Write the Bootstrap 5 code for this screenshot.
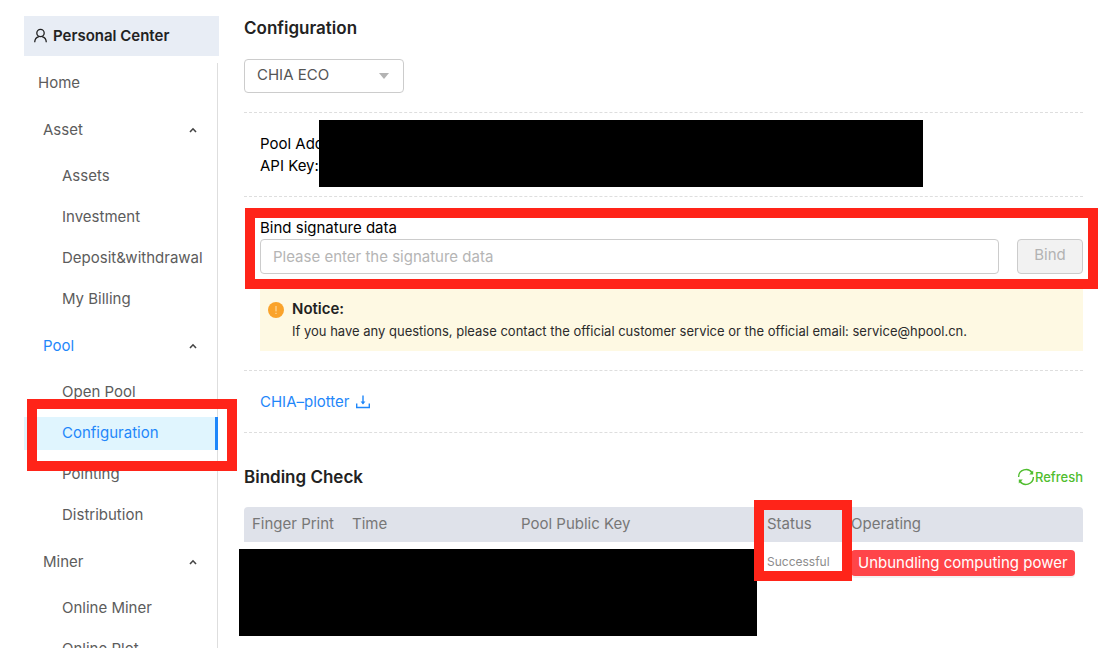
<!DOCTYPE html>
<html lang="en">
<head>
<meta charset="utf-8">
<meta name="viewport" content="width=device-width, initial-scale=1">
<title>Configuration</title>
<link href="https://cdn.jsdelivr.net/npm/bootstrap@5.3.0/dist/css/bootstrap.min.css" rel="stylesheet">
<style>
  body { font-family: Inter, "Liberation Sans", sans-serif; font-size: 15px; line-height: 22px; color: #000; background: #fff; }
  a { text-decoration: none; }
  .page { scrollbar-width: none; padding: 16px 19px 0 24px; gap: 25px; }
  .page::-webkit-scrollbar { display: none; }

  /* Sidebar */
  .side { width: 195px; }
  .side-title { height: 40px; background: #e8edf5; color: #222; font-weight: 600; padding-left: 9px; gap: 4px; margin-bottom: 7px; }
  .side-menu { margin-right: 1px; border-right: 1px solid #dedede; }
  .side-menu a, .side-menu button { color: #5c5c5c; }
  .home-link { height: 41px; padding-left: 14px; padding-bottom: 1px; }
  .group-btn { height: 40px; margin: 6px 0; padding: 0 19px; background: none; }
  .side-menu .group-btn.current { color: #1f87fa; }
  .group-btn svg { color: #444; }
  .sub-item { padding: 4px 0; }
  .sub-item a { height: 33px; padding-left: 38px; padding-bottom: 1px; }
  .sub-item a.current { color: #1f87fa; background: #e0f5fe; border-right: 3px solid #1f87fa; margin-right: -1px; }

  /* Highlight frames and blacked-out data */
  .frame { position: absolute; border: 10px solid #ff2419; pointer-events: none; z-index: 3; }
  .blackout { position: absolute; background: #000; z-index: 2; }
  .frame-menu { left: 3px; top: -14px; width: 210px; height: 72px; }
  .frame-bind { left: 1px; right: -15px; top: 11px; height: 81px; }
  .frame-status { right: 231px; top: -7px; width: 98px; height: 81px; }
  .blackout-pool { left: 75px; right: 160px; top: 7px; height: 67px; }
  .blackout-row { left: -5px; right: 326px; top: 42px; height: 87px; }

  /* Main column */
  .main-title { font-size: 17px; line-height: 24px; font-weight: 600; color: #222; margin: 0; }
  .pool-select { width: 160px; height: 34px; padding: 0 36px 1px 12px; margin-top: 19px; margin-bottom: 19px; border: 1px solid #ccc; border-radius: 4px; font-size: 15px; color: #555;
    background-image: url("data:image/svg+xml,%3Csvg xmlns='http://www.w3.org/2000/svg' viewBox='0 0 10 6'%3E%3Cpath fill='%23b3b3b3' d='M0 0h10L5 6z'/%3E%3C/svg%3E");
    background-size: 10px 6px; background-position: right 14px center; }
  .block { border-top: 1px dashed #dedede; padding-left: 16px; position: relative; }
  .pool-info { padding-top: 20px; padding-bottom: 19px; }
  .bind-block { padding-top: 20px; padding-bottom: 19px; }
  .bind-row { gap: 18px; }
  .bind-row .form-control { height: 35px; border: 1px solid #ccc; border-radius: 4px; padding: 0 12px; font-size: 15px; }
  .bind-row .form-control::placeholder { color: #b5b5b5; }
  .bind-row .btn { width: 66px; height: 35px; border: 1px solid #ccc; border-radius: 4px; background: #f2f2f2; color: #b3b3b3; font-size: 15px; opacity: 1; padding: 0 0 2px; }
  .notice { background: #fef9e3; margin-top: 10px; padding: 14px 8px 8px; gap: 8px; color: #2b2b2b; }
  .notice strong { font-weight: 600; color: #222; }
  .notice p { font-size: 13px; line-height: 23px; }
  .notice svg { margin-top: 4px; }
  .plotter { padding-top: 20px; padding-bottom: 19px; }
  .plotter a { color: #1f87fa; gap: 5px; }
  .check-block { border-top: 1px dashed #dedede; padding-top: 32px; }
  .refresh { color: #4fbd2e; font-size: 13px; font-weight: 500; background: none; line-height: 24px; }
  .check-table { table-layout: fixed; margin-top: 18px; }
  .check-table th { height: 35px; padding: 0 8px 2px; background: #dfe2ea; color: #777; font-weight: 400; vertical-align: middle; white-space: nowrap; }
  .check-table th:first-child { border-top-left-radius: 4px; }
  .check-table th:last-child { border-top-right-radius: 4px; }
  .check-table td { height: 42px; padding: 0 8px; vertical-align: middle; white-space: nowrap; }
  .check-table .state { color: #8c8c8c; font-size: 12px; padding-bottom: 2px; }
  .unbind { height: 26px; padding: 0 7px; border: 0; border-radius: 4px; background: #ff4549; color: #fff; font-size: 15px; line-height: 26px; box-shadow: 0 2px 0 rgba(0, 0, 0, .05); }
</style>
</head>
<body>
<div class="page d-flex vh-100 overflow-auto">
  <aside class="side flex-shrink-0 d-flex flex-column">
    <div class="side-title d-flex align-items-center flex-shrink-0">
      <svg width="16" height="16" viewBox="0 0 16 16" fill="none" stroke="currentColor" stroke-width="1.3" aria-hidden="true"><circle cx="7.5" cy="5" r="3.7"/><path d="M1.7 14.2c.1-3 1.8-5 4.2-5.6M13.3 14.2c-.1-3-1.8-5-4.2-5.6"/></svg>
      <span>Personal Center</span>
    </div>
    <nav class="side-menu flex-grow-1">
      <a class="home-link d-flex align-items-center" href="#">Home</a>
      <button type="button" class="group-btn w-100 border-0 d-flex align-items-center justify-content-between">Asset
        <svg width="10" height="10" viewBox="0 0 10 10" fill="none" stroke="currentColor" stroke-width="1.6" aria-hidden="true"><path d="M2 7l3-3.2L8 7"/></svg></button>
      <ul class="list-unstyled m-0">
        <li class="sub-item"><a class="d-flex align-items-center" href="#">Assets</a></li>
        <li class="sub-item"><a class="d-flex align-items-center" href="#">Investment</a></li>
        <li class="sub-item"><a class="d-flex align-items-center" href="#">Deposit&amp;withdrawal</a></li>
        <li class="sub-item"><a class="d-flex align-items-center" href="#">My Billing</a></li>
      </ul>
      <button type="button" class="group-btn current w-100 border-0 d-flex align-items-center justify-content-between">Pool
        <svg width="10" height="10" viewBox="0 0 10 10" fill="none" stroke="currentColor" stroke-width="1.6" aria-hidden="true"><path d="M2 7l3-3.2L8 7"/></svg></button>
      <ul class="list-unstyled m-0">
        <li class="sub-item"><a class="d-flex align-items-center" href="#">Open Pool</a></li>
        <li class="sub-item position-relative"><a class="current d-flex align-items-center" href="#" aria-current="page">Configuration</a><span class="frame frame-menu"></span></li>
        <li class="sub-item"><a class="d-flex align-items-center" href="#">Pointing</a></li>
        <li class="sub-item"><a class="d-flex align-items-center" href="#">Distribution</a></li>
      </ul>
      <button type="button" class="group-btn w-100 border-0 d-flex align-items-center justify-content-between">Miner
        <svg width="10" height="10" viewBox="0 0 10 10" fill="none" stroke="currentColor" stroke-width="1.6" aria-hidden="true"><path d="M2 7l3-3.2L8 7"/></svg></button>
      <ul class="list-unstyled m-0">
        <li class="sub-item"><a class="d-flex align-items-center" href="#">Online Miner</a></li>
        <li class="sub-item"><a class="d-flex align-items-center" href="#">Online Plot</a></li>
      </ul>
    </nav>
  </aside>

  <main class="flex-grow-1">
    <h1 class="main-title">Configuration</h1>
    <select class="pool-select form-select" aria-label="Pool"><option>CHIA ECO</option></select>

    <section class="block pool-info">
      <div>Pool Address:</div>
      <div>API Key:</div>
      <span class="blackout blackout-pool"></span>
    </section>

    <section class="block bind-block">
      <label class="d-block" for="signature">Bind signature data</label>
      <div class="bind-row d-flex">
        <input type="text" class="form-control" id="signature" placeholder="Please enter the signature data">
        <button type="button" class="btn flex-shrink-0" disabled>Bind</button>
      </div>
      <div class="notice d-flex">
        <svg class="flex-shrink-0" width="16" height="16" viewBox="0 0 16 16" aria-hidden="true"><circle cx="8" cy="8" r="8" fill="#faa32b"/><path d="M8 4v5.4M8 10.8v1.2" stroke="#fde3b5" stroke-width="1"/></svg>
        <div>
          <strong class="d-block">Notice:</strong>
          <p class="m-0">If you have any questions, please contact the official customer service or the official email: service@hpool.cn.</p>
        </div>
      </div>
      <span class="frame frame-bind"></span>
    </section>

    <section class="block plotter">
      <a class="d-inline-flex align-items-center" href="#">CHIA–plotter
        <svg width="16" height="16" viewBox="0 0 16 16" fill="none" stroke="currentColor" stroke-width="1.4" aria-hidden="true"><path d="M1.7 9.5v4h12.6v-4M8 1.5v8"/><path d="M5.6 7.5h4.8L8 10.6z" fill="currentColor" stroke="none"/></svg></a>
    </section>

    <section class="check-block">
      <div class="d-flex justify-content-between">
        <h2 class="main-title">Binding Check</h2>
        <button type="button" class="refresh border-0 p-0 d-flex align-items-center">
          <svg width="18" height="18" viewBox="0 0 18 18" fill="none" stroke="currentColor" stroke-width="1.4" aria-hidden="true"><path d="M1.6 9A7.4 7.4 0 0 1 15.2 5M16.4 9A7.4 7.4 0 0 1 2.8 13"/><path d="M16.2 2.6v4h-4zM1.8 15.4v-4h4z" fill="currentColor" stroke="none"/></svg>Refresh</button>
      </div>
      <div class="position-relative">
        <table class="check-table w-100">
          <colgroup><col style="width:100px"><col style="width:169px"><col><col style="width:84px"><col style="width:240px"></colgroup>
          <thead><tr><th>Finger Print</th><th>Time</th><th>Pool Public Key</th><th>Status</th><th>Operating</th></tr></thead>
          <tbody><tr><td></td><td></td><td></td><td class="state">Successful</td><td><button type="button" class="unbind">Unbundling computing power</button></td></tr></tbody>
        </table>
        <span class="blackout blackout-row"></span>
        <span class="frame frame-status"></span>
      </div>
    </section>
  </main>
</div>
<script src="https://cdn.jsdelivr.net/npm/bootstrap@5.3.0/dist/js/bootstrap.bundle.min.js"></script>
</body>
</html>
